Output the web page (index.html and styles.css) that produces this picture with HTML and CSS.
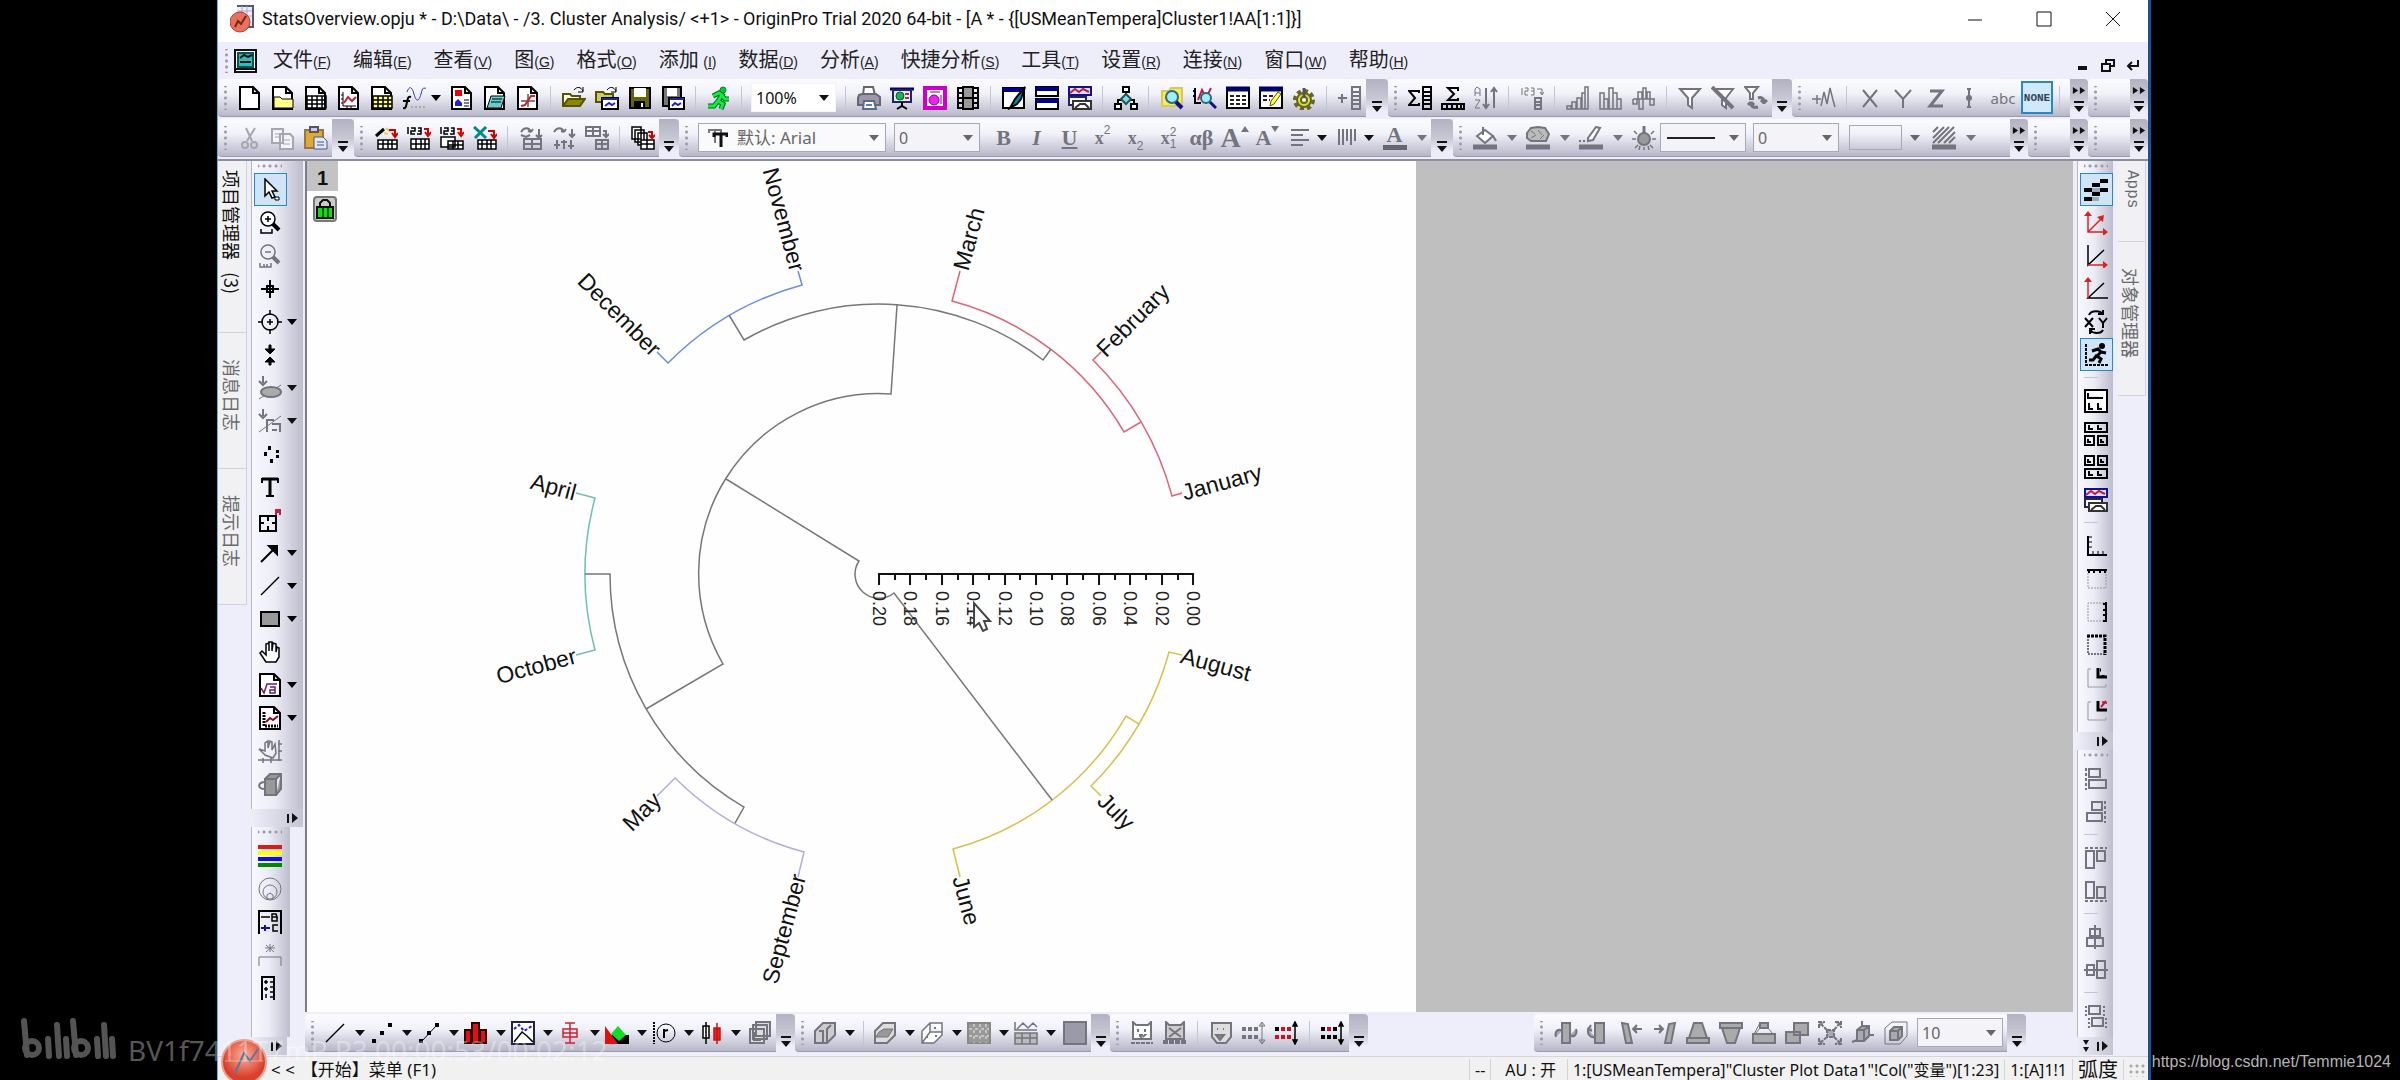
FILE: index.html
```html
<!DOCTYPE html>
<html lang="zh-CN">
<head>
<meta charset="utf-8">
<title>StatsOverview.opju - OriginPro</title>
<link rel="stylesheet" href="styles.css">
</head>
<body>
<svg class="defs" aria-hidden="true">
<symbol id="new" viewBox="0 0 24 24"><path fill="#fff" d="M2 1h13l6 6v16H2zM15 1v6h6"/></symbol>
<symbol id="folder" viewBox="0 0 24 24"><path fill="#fff" d="M2 1h13l6 6v16H2zM15 1v6h6"/><path fill="#ff8" stroke-width="1" d="M3 22V11h6l2 2h11v9z"/></symbol>
<symbol id="book" viewBox="0 0 24 24"><path fill="#fff" d="M2 1h13l6 6v16H2zM15 1v6h6"/><path stroke-width="1.5" d="M3 10h19v12H3zM3 14h19M3 18h19M8 10v12M13 10v12M18 10v12"/></symbol>
<symbol id="graph" viewBox="0 0 24 24"><path fill="#fff" d="M2 1h13l6 6v16H2zM15 1v6h6"/><path d="M6 6v14h13M4 9h2M4 13h2M4 17h2M10 20v2M14 20v2" stroke-width="1"/><path stroke="#c02040" d="M7 17l4-6 4 4 4-4"/></symbol>
<symbol id="matrix" viewBox="0 0 24 24"><path fill="#fff" d="M2 1h13l6 6v16H2zM15 1v6h6"/><path fill="#ff6" stroke-width="1.5" d="M3 10h19v12H3zM3 14h19M3 18h19M8 10v12M13 10v12M18 10v12"/></symbol>
<symbol id="func" viewBox="0 0 24 24"><path stroke="#33a" stroke-width="1" d="M4 6c2-6 5-6 7 2s5 8 7 0 2-5 5-6"/><path d="M8 11c-3-1-3 1-4 5s-1 7-4 6M0 15h7"/><path stroke="#aaa" d="M8 21h15" stroke-dasharray="2 2"/></symbol>
<symbol id="layout" viewBox="0 0 24 24"><path fill="#fff" d="M2 1h13l6 6v16H2zM15 1v6h6"/><path fill="#e00" stroke="none" d="M5 4h7v6H5z"/><path fill="#22c" stroke="none" d="M5 20v-4l3-3 4 4v3z"/><path stroke-width="1" d="M14 14h5M14 17h5M14 20h5"/></symbol>
<symbol id="notes" viewBox="0 0 24 24"><path fill="#fff" d="M2 1h13l6 6v16H2zM15 1v6h6"/><path fill="#6cc" stroke-width="1" d="M8 10h14l-4 12H4zM9 13h10M8 16h10"/></symbol>
<symbol id="fit" viewBox="0 0 24 24"><path fill="#fff" d="M2 1h13l6 6v16H2zM15 1v6h6"/><path d="M5 15h14M12 8v13" stroke-width="1"/><path stroke="#d02020" d="M5 20l4-1 6-9h4"/></symbol>
<symbol id="open" viewBox="0 0 24 24"><path fill="#ffd" d="M1 20V8h7l2 2h8v3" stroke="#550"/><path fill="#880" stroke="#550" d="M1 20l5-7h17l-5 7z"/><path d="M12 4c3-4 7-3 9 1m0-4v5h-5" stroke-width="1"/></symbol>
<symbol id="openx" viewBox="0 0 24 24"><path fill="#cc6" stroke="#550" d="M1 16V6h7l2 2h8v8z"/><path fill="#fff" d="M7 12h16v11H7z"/><path stroke="#22a" d="M7 13h16M10 20l4-3 3 2 3-2"/><path d="M12 4c3-4 7-3 9 1m0-4v5h-5" stroke-width="1"/></symbol>
<symbol id="save" viewBox="0 0 24 24"><path fill="#660" d="M2 2h20v20H2z"/><path fill="#fff" stroke="none" d="M6 2h12v9H6z"/><path fill="#000" d="M7 16h9v6H7z"/><path stroke="#fff" d="M14 17v4"/></symbol>
<symbol id="saveas" viewBox="0 0 24 24"><path fill="#777" d="M2 1h18v19H2z"/><path fill="#fff" stroke="none" d="M6 2h10v8H6z"/><path fill="#fff" d="M8 12h15v11H8z"/><path stroke="#22a" d="M9 13h14M11 20l3-3 3 2 3-2"/></symbol>
<symbol id="run" viewBox="0 0 24 24"><circle cx="16" cy="4" r="3" fill="#0c2" stroke="#084" stroke-width="1"/><path stroke="#063" stroke-width="5" d="M6 10l6-3 3 2-4 6 5 3-2 5M11 15l-4 5-6 0M15 10l3 3h4"/><path stroke="#1e3" stroke-width="3" d="M6 10l6-3 3 2-4 6 5 3-2 5M11 15l-4 5-6 0M15 10l3 3h4"/></symbol>
<symbol id="print" viewBox="0 0 24 24"><path fill="#fff" stroke="#666" d="M7 1h9l2 8H6z"/><path fill="#99a" stroke="#667" d="M2 9l3-1h14l4 3v8H1v-7z"/><path fill="#fff" stroke="#668" d="M7 15h10l2 8H6z"/><path stroke="#48c" d="M9 19h6"/></symbol>
<symbol id="slide" viewBox="0 0 24 24"><path stroke="#008" stroke-width="3" d="M0 3h24"/><path fill="#def" stroke="#226" d="M3 4h18v12H3z"/><circle cx="10" cy="10" r="4" fill="#2a6" stroke="#060" stroke-width="1"/><path stroke="#c22" d="M15 8h4M15 12h4"/><path d="M12 16v5M7 23l5-3 5 3"/></symbol>
<symbol id="ppt" viewBox="0 0 24 24"><path fill="#fff" stroke="#c0c" stroke-width="4" d="M2 2h20v20H2z"/><circle cx="11" cy="14" r="5" fill="#e2e" stroke="#808" stroke-width="1"/><path stroke="#808" stroke-width="1" d="M7 6h10M18 9v9"/></symbol>
<symbol id="film" viewBox="0 0 24 24"><path fill="#999" d="M2 1v22M22 1v22M7 1h10v22H7zM7 12h10M2 2h5M2 7h5M2 12h5M2 17h5M2 22h5M17 2h5M17 7h5M17 12h5M17 17h5M17 22h5" /></symbol>
<symbol id="brush" viewBox="0 0 24 24"><path fill="#fff" d="M1 2h21v20H1z"/><path stroke="#009" stroke-width="4" d="M1 4h21"/><path fill="#08a" d="M23 1L13 13l-5 9 7-4 4-5z"/></symbol>
<symbol id="winh" viewBox="0 0 24 24"><path fill="#fff" d="M1 1h22v9H1zM1 13h22v10H1z"/><path stroke="#009" stroke-width="4" d="M1 3h22M1 15h22"/></symbol>
<symbol id="wins" viewBox="0 0 24 24"><path fill="#ddf" stroke="#118" d="M1 1h22v8H1z"/><path stroke="#c02040" d="M2 7l5-4 4 3 4-3 6 3"/><path fill="#fff" stroke="#226" d="M1 11h17v8H1z"/><path fill="#fff" stroke="#333" d="M5 15h18v8H5zM7 22l5-4h5l4 4"/></symbol>
<symbol id="tree" viewBox="0 0 24 24"><path fill="#fff" d="M9 1h6v5H9zM1 18h6v5H1zM17 18h6v5h-6zM12 6v3M4 18v-4h4M20 18v-4h-4"/><path fill="#7dd" d="M12 8l5 5-5 5-5-5z" stroke="#255"/></symbol>
<symbol id="mag" viewBox="0 0 24 24"><path fill="#ffe94d" stroke="#cc6" d="M2 5h7l2-3h11v18H2z"/><circle cx="12" cy="11" r="6" fill="#9ef" stroke="#367"/><path stroke="#118" stroke-width="4" d="M16 16l6 6"/></symbol>
<symbol id="magg" viewBox="0 0 24 24"><path d="M2 2v15h6M0 5h2M0 10h2"/><path stroke="#c02040" d="M5 14l4-10 4 8 5-10"/><circle cx="13" cy="12" r="5" fill="#9ef" stroke="#367"/><path stroke="#118" stroke-width="3" d="M17 16l6 6"/></symbol>
<symbol id="tbl" viewBox="0 0 24 24"><path fill="#fff" d="M1 2h22v20H1z"/><path stroke="#006" stroke-width="5" d="M0 3h24"/><path stroke="#222" d="M4 10h16M4 14h16M4 18h16" stroke-dasharray="4 2"/></symbol>
<symbol id="tbp" viewBox="0 0 24 24"><path fill="#fff" d="M1 2h22v20H1z"/><path stroke="#006" stroke-width="5" d="M0 3h24"/><path stroke="#222" d="M4 10h10M4 14h7" stroke-dasharray="4 2"/><path stroke="#550" fill="#ff4" stroke-width="1" d="M19 6l3 2-7 10-4 2 1-5z"/></symbol>
<symbol id="gear" viewBox="0 0 24 24"><circle cx="12" cy="14" r="9" stroke="#662" stroke-width="4" stroke-dasharray="4 3"/><circle cx="12" cy="14" r="7" fill="#dd3" stroke="#662"/><circle cx="12" cy="14" r="3" fill="#fff" stroke="#662"/><path stroke="#555" stroke-width="3" d="M12 2v10"/></symbol>
<symbol id="addcol" viewBox="0 0 24 24"><path d="M0 12h9M4 8v9M14 1h8v22h-8zM14 6h8M14 10h8M14 14h8M14 18h8"/></symbol>
<symbol id="sumc" viewBox="0 0 24 24"><path d="M11 7V5H1l6 7-6 7h10v-2M15 1h8v22h-8zM15 6h8M15 10h8M15 14h8M15 18h8"/></symbol>
<symbol id="sumr" viewBox="0 0 24 24"><path d="M17 5V2H7l6 6-6 6h10v-2M1 18h22v5H1zM6 18v5M11 18v5M16 18v5M20 18v5"/></symbol>
<symbol id="sort" viewBox="0 0 24 24"><path stroke-width="1" d="M1 10V3l2-2 3 2v7M1 7h5M1 14h5l-5 8h5"/><path d="M12 2v20M9 18l3 4 3-4M20 22V2M17 6l3-4 3 4"/></symbol>
<symbol id="n123" viewBox="0 0 24 24"><path stroke-width="1" d="M2 2v7M5 2h3v3H5v4h3M11 2h3v7h-3M11 5h3M17 3h5v5M20 6l2 3 2-3"/><path d="M15 12h6v11h-6zM15 16h6M15 19h6"/></symbol>
<symbol id="bar1" viewBox="0 0 24 24"><path stroke-width="1.5" d="M1 23v-3h4v3zM6 23v-7h4v7zM11 23V12h4v11zM16 23V7h3v16zM19 23V1h3v22z"/></symbol>
<symbol id="bar2" viewBox="0 0 24 24"><path stroke-width="1.5" d="M1 23V7h4v16zM5 23V13h4v10zM10 23V2h4v21zM14 23V7h4v16zM18 23V13h4v10z"/></symbol>
<symbol id="bar3" viewBox="0 0 24 24"><path stroke-width="1.5" d="M1 13h22M1 13v5h4v-5M6 13V6h4v7M7 13v10h4V13M11 13V2h3v11M15 13V6h3v7M18 13v6h4v-6"/></symbol>
<symbol id="filter" viewBox="0 0 24 24"><path fill="#fff" d="M2 3h20l-8 9v10l-4-3v-7z"/></symbol>
<symbol id="filterx" viewBox="0 0 24 24"><path fill="#fff" d="M4 3h18l-7 9v10l-4-3v-7z"/><path stroke-width="4" d="M1 1l21 21"/></symbol>
<symbol id="filterr" viewBox="0 0 24 24"><path fill="#fff" d="M1 1h13L9 7v6H6V7z"/><path stroke-width="3" d="M20 16c0-4-3-5-6-4m6 5l-3-3m3 3l3-3M7 17c0 4 3 5 7 4m-7-5l-3 3m3-3l3 3"/></symbol>
<symbol id="addm" viewBox="0 0 24 24"><path stroke-width="1.5" d="M0 13h9M5 9v9M9 20l3-14 3 12 3-16 3 12 2 7"/></symbol>
<symbol id="gx" viewBox="0 0 24 24"><path d="M5 4l14 17M19 4L5 21"/></symbol>
<symbol id="gy" viewBox="0 0 24 24"><path d="M4 4l8 9 8-9M12 13v9"/></symbol>
<symbol id="gz" viewBox="0 0 24 24"><path stroke-width="3" d="M6 5h12L6 20h13"/></symbol>
<symbol id="errb" viewBox="0 0 24 24"><path d="M10 3h4M12 3v18M10 21h4M10 12h4" stroke-width="2"/><circle cx="12" cy="12" r="2" fill="currentColor"/></symbol>
<symbol id="cut" viewBox="0 0 24 24"><path d="M8 2l6 13M17 2L9 15"/><circle cx="7" cy="19" r="3"/><circle cx="16" cy="19" r="3"/></symbol>
<symbol id="copy" viewBox="0 0 24 24"><path fill="#f4f4f8" d="M1 3h11v14H1zM9 8h10l3 3v12H9z"/><path stroke-width="1" d="M4 8h5M4 11h4M12 14h7M12 18h7"/></symbol>
<symbol id="paste" viewBox="0 0 24 24"><path fill="#da3" stroke="#974" d="M1 4h18v18H1z"/><path fill="#ccd" stroke="#556" d="M6 1h8v5H6z"/><path fill="#dde8ff" stroke="#557" stroke-width="1" d="M10 11h9l4 4v8H10zM13 16h7M13 19h7"/></symbol>
<symbol id="impw" viewBox="0 0 24 24"><path d="M2 10l8-7" stroke-width="3"/><path stroke="#e8d060" d="M12 2l4 4M10 7l4 1"/><path stroke="#c00" d="M15 4h6v6M18 7l3 4 3-4"/><path fill="#fff" stroke-width="1.5" d="M4 14h19v9H4zM4 18h19M9 14v9M14 14v9M18 14v9"/></symbol>
<symbol id="imp1" viewBox="0 0 24 24"><path stroke-width="1.5" d="M1 1v7M4 2h4v3H4v3h4M11 2h3v6h-4M11 5h3"/><path stroke="#c00" d="M17 3h4v5M18 6l3 4 3-4"/><path fill="#fff" stroke-width="1.5" d="M4 13h18v10H4zM4 18h18M9 13v10M14 13v10M18 13v10"/></symbol>
<symbol id="imp2" viewBox="0 0 24 24"><path stroke-width="1.5" d="M1 1v7M4 2h4v3H4v3h4M11 2h3v6h-4M11 5h3"/><path stroke="#c00" d="M17 3h4v5M18 6l3 4 3-4"/><path fill="#fff" stroke-width="1.5" d="M1 11h14v10H1zM8 15h15v8H8zM8 19h15M13 15v8M18 15v8"/></symbol>
<symbol id="impx" viewBox="0 0 24 24"><path stroke="#088" stroke-width="3" d="M1 1l12 11M13 1L2 12"/><path stroke="#c00" d="M15 5h6v6M18 8l3 4 3-4"/><path fill="#fff" stroke-width="1.5" d="M5 14h18v9H5zM5 18h18M9 14v9M14 14v9M18 14v9"/></symbol>
<symbol id="rc1" viewBox="0 0 24 24"><path d="M2 6c3-5 8-5 10 0m0 0l-3-1m3 1l2-3M20 3v9M17 9l3 3 3-3M5 13h17v10H5zM5 18h17M13 13v10M2 9l5 2 4-2"/></symbol>
<symbol id="rc2" viewBox="0 0 24 24"><path d="M2 6c3-5 8-5 10 0m0 0l-3-1m3 1l2-3M20 3v7M17 8l3 3 3-3M5 14v9M12 14v9M19 14v9M2 19h6M9 16h6M16 20h6"/></symbol>
<symbol id="rc3" viewBox="0 0 24 24"><path d="M1 1h14v9H1zM1 5h14M8 1v9M18 5h3v5M18 8l3 3 3-3M11 14h12v9H11zM11 18h12M17 14v9"/></symbol>
<symbol id="dup" viewBox="0 0 24 24"><path fill="#fff" stroke-width="1.5" d="M1 1h9v12H1zM4 4h9v12H4zM7 7h9v12H7z"/><path fill="#fff" stroke-width="1.5" d="M10 14h13v9H10zM10 18h13M16 14v9"/><path stroke="#c00" d="M17 6h4v5M18 9l3 3 3-3"/></symbol>
<symbol id="al" viewBox="0 0 24 24"><path d="M2 4h18M2 9h12M2 14h18M2 19h12"/></symbol>
<symbol id="vl" viewBox="0 0 24 24"><path d="M3 3v16M7 3v16M11 3v12M15 3v16M19 3v12" stroke-width="2"/></symbol>
<symbol id="fill" viewBox="0 0 24 24"><path fill="#fff" d="M4 10l8-6 8 6-8 7zM10 1v8"/><path stroke-width="5" d="M0 21h24"/><path d="M20 10l3 5"/></symbol>
<symbol id="pal" viewBox="0 0 24 24"><path fill="#bbb" d="M1 7l4-5 7-1 7 1 4 6-3 7H5L1 12z"/><path stroke-width="1" d="M5 5l4 3M12 4l4 5M5 12l5-3M14 13l4-4"/><path stroke-width="5" d="M0 21h24"/></symbol>
<symbol id="pen" viewBox="0 0 24 24"><path fill="#fff" d="M9 12L17 1l4 1-7 12-5 1z"/><path d="M0 15h8" stroke-dasharray="2 2"/><path stroke-width="5" d="M0 21h24"/></symbol>
<symbol id="bulb" viewBox="0 0 24 24"><path stroke-width="3" d="M12 0v7"/><circle cx="12" cy="13" r="6" fill="#999"/><path stroke-width="1.5" d="M0 13h4M20 13h4M2 5l3 3M22 5l-3 3M3 22l3-3M21 22l-3-3M12 21v3M8 20l-1 4M16 20l1 4"/></symbol>
<symbol id="hatch" viewBox="0 0 24 24"><path d="M1 6l5-5M1 12L12 1M1 17L17 1M6 17L22 1M12 17L23 6M17 17l6-6"/><path stroke-width="5" d="M0 21h24"/></symbol>
<symbol id="ptr" viewBox="0 0 24 24"><path fill="#fff" stroke-width="1.5" d="M7 1v17l4-4 3 6 3-1-3-6h5z"/><path fill="#fff" stroke-width="1" d="M17 19h4v3h-4z"/></symbol>
<symbol id="zin" viewBox="0 0 24 24"><circle cx="10" cy="8" r="7" fill="#fff" stroke-width="1.5"/><path stroke-width="1.5" d="M10 5v6M7 8h6M3 18v4h11v-4"/><path stroke-width="4" d="M15 13l6 6"/></symbol>
<symbol id="zout" viewBox="0 0 24 24"><circle cx="10" cy="8" r="7" stroke-width="1.5"/><path stroke-width="1.5" d="M7 8h6M2 19v4h11v-4M6 20v3M9 20v3"/><path stroke-width="4" d="M15 13l6 6"/></symbol>
<symbol id="cross" viewBox="0 0 24 24"><path d="M12 3v18M3 12h18M9 9h6v6H9z"/></symbol>
<symbol id="target" viewBox="0 0 24 24"><circle cx="12" cy="12" r="8" stroke-width="1.5"/><path stroke-width="1.5" d="M12 0v5M12 19v5M0 12h5M19 12h5M12 9v6M9 12h6"/></symbol>
<symbol id="sel2" viewBox="0 0 24 24"><path fill="currentColor" stroke-width="1" d="M11 2h2v4h4l-5 5-5-5h4zM11 22h2v-3h4l-5-5-5 5h4z"/></symbol>
<symbol id="mask" viewBox="0 0 24 24"><path stroke-width="1" d="M1 23L23 9"/><ellipse cx="13" cy="16" rx="10" ry="5" fill="#aaa"/><path d="M5 0v7M1 5l4 4 4-4"/></symbol>
<symbol id="mask2" viewBox="0 0 24 24"><path stroke-width="1" d="M1 23L23 7"/><path d="M5 0v7M1 5l4 4 4-4M9 23V11h7M14 15h8v8M14 21h5"/></symbol>
<symbol id="dots" viewBox="0 0 24 24"><path fill="currentColor" stroke="none" d="M10 4h3v4h-3zM6 10h3v4H6zM12 17h3v4h-3zM18 8h3v3h-3zM18 13h3v3h-3z"/></symbol>
<symbol id="tt" viewBox="0 0 24 24"><path d="M4 8V4h16v4"/><path stroke-width="3" d="M4 4h16M12 4v17"/><path d="M8 21h8"/></symbol>
<symbol id="rgn" viewBox="0 0 24 24"><path d="M2 8h16v15H2zM10 8v5M10 18v5M2 15h4M14 15h4"/><path stroke="#c02040" d="M18 7V2h4v5M18 4h4"/></symbol>
<symbol id="arrow" viewBox="0 0 24 24"><path d="M3 21L17 7"/><path fill="currentColor" d="M11 5h8v8z"/></symbol>
<symbol id="line" viewBox="0 0 24 24"><path stroke-width="1.5" d="M3 21L21 3"/></symbol>
<symbol id="rect" viewBox="0 0 24 24"><path fill="#999" d="M3 5h18v14H3z"/></symbol>
<symbol id="hand" viewBox="0 0 24 24"><path fill="#fff" stroke-width="1.5" d="M8 22l-6-9 2-2 4 4V4l3-1v8V2h3v9l1-8 3 1v8l1-5 2 1v9l-3 5z"/></symbol>
<symbol id="sqa" viewBox="0 0 24 24"><path fill="#fff" d="M2 1h14l6 6v16H2zM16 1v6h6"/><path stroke="#626" stroke-width="1.5" d="M3 15l3 5 3-9h10M12 14h5v6h-5v-3h5"/></symbol>
<symbol id="gins" viewBox="0 0 24 24"><path fill="#fff" d="M2 1h14l6 6v16H2zM16 1v6h6"/><path d="M6 6v14h14" stroke-width="3" stroke-dasharray="2 1"/><path stroke="#902" d="M8 16l4-4 3 2 5-4"/></symbol>
<symbol id="hand2" viewBox="0 0 24 24"><path stroke-width="1.5" d="M7 16l-6-6 6 2V4l3-2v7l2-7 2 1v8l3-6 1 9-3 5zM21 1v21M0 21h24M20 5h4M20 12h4M5 19v5M13 19v5"/></symbol>
<symbol id="cube" viewBox="0 0 24 24"><path fill="#999" d="M7 7h11v16H7zM7 7l5-5h11l-5 5M23 2v15l-5 6"/><path d="M6 17c-7-1-6-6 0-7"/></symbol>
<symbol id="stripes" viewBox="0 0 24 24"><path stroke-width="4" stroke="#e01818" d="M0 3h24"/><path stroke-width="4" stroke="#ff0" d="M0 9h24"/><path stroke-width="4" stroke="#11c" d="M0 15h24"/><path stroke-width="4" stroke="#080" d="M0 21h24"/></symbol>
<symbol id="circ" viewBox="0 0 24 24"><circle cx="12" cy="12" r="11" stroke-width="1"/><circle cx="12" cy="15" r="7" stroke-width="1"/><path stroke-width="1" d="M9 22v-4l3-2 3 2v4"/></symbol>
<symbol id="bc" viewBox="0 0 24 24"><path d="M1 24V1h22v23"/><path stroke-width="1.5" d="M3 7h9M14 4h4l1 3h-5zM14 7h5v4h-5zM20 15h-5v6h5"/><path stroke="#11a" d="M3 18h9M7 15v6"/></symbol>
<symbol id="ast" viewBox="0 0 24 24"><path d="M1 23V14h22v9M12 1v8M7 5h10M8 2l8 7M16 2L8 9" stroke-width="1"/></symbol>
<symbol id="rul" viewBox="0 0 24 24"><path d="M4 24V1h12v23"/><path d="M8 4v4M6 6h4M8 11v4M6 13h4M8 18v4M12 6h4M12 11h4M12 16h4M12 21h4" stroke-width="1.5"/></symbol>
<symbol id="anti" viewBox="0 0 24 24"><path fill="currentColor" stroke="none" d="M16 1h8v4h-8zM8 5h8v4H8zM0 10h8v4H0zM16 10h8v4h-8zM8 14h8v4H8zM0 19h8v4H0z"/><path fill="#9ab" stroke="none" d="M8 10h8v4H8zM8 19h7v4H8z"/></symbol>
<symbol id="ax1" viewBox="0 0 24 24"><path stroke="#d22" stroke-width="1.5" d="M4 4v17h17M4 21L18 7"/><path fill="#d22" stroke="none" d="M4 0l4 5H0zM24 21l-5-4v8zM20 4l-1 7-6-5z"/></symbol>
<symbol id="ax2" viewBox="0 0 24 24"><path stroke-width="1.5" d="M4 1v20L20 6"/><path stroke="#d22" stroke-width="1.5" d="M4 21h17"/><path fill="#d22" stroke="none" d="M24 21l-5-4v8z"/></symbol>
<symbol id="ax3" viewBox="0 0 24 24"><path stroke-width="1.5" d="M24 21H4L20 6"/><path stroke="#d22" stroke-width="1.5" d="M4 4v17"/><path fill="#d22" stroke="none" d="M4 0l4 5H0z"/></symbol>
<symbol id="xy" viewBox="0 0 24 24"><path d="M1 8l8 9M9 8l-8 9M15 8l4 5 4-5M19 13v5M5 5c2-5 12-5 14 0M14 4h5V0M19 20c-2 4-10 4-13 0M11 19H6v5"/></symbol>
<symbol id="runb" viewBox="0 0 24 24"><path d="M2 1v21h22" stroke-dasharray="3 1"/><circle cx="18" cy="3" r="2" fill="currentColor"/><path stroke-width="3" d="M8 8l6-2 3 3-4 4 4 3-2 4M13 12l-4 5H5M17 9l5 1"/></symbol>
<symbol id="l1" viewBox="0 0 24 24"><path fill="#fff" d="M1 1h22v22H1zM4 4v5h15M5 14v6h4M14 14v6h4"/></symbol>
<symbol id="l2" viewBox="0 0 24 24"><path d="M1 1h22v9H1zM1 14h9v9H1zM14 14h9v9h-9zM5 3v4h4M14 3v4h4M4 17v3h3M17 17v3h3"/></symbol>
<symbol id="l3" viewBox="0 0 24 24"><path d="M1 14h22v9H1zM1 1h9v9H1zM14 1h9v9h-9zM5 16v4h4M14 16v4h4M4 4v3h3M17 4v3h3"/></symbol>
<symbol id="e1" viewBox="0 0 24 24"><path d="M4 2v19h19" stroke-width="2"/><path d="M5 3h3M5 8h3M5 13h3M9 20v-3M14 20v-3M19 20v-3" stroke-width="1"/></symbol>
<symbol id="e2" viewBox="0 0 24 24"><path d="M4 3v18h18V3" stroke="#999" stroke-width="1" stroke-dasharray="2 1"/><path d="M3 3h20M5 3v3M10 3v3M16 3v3M21 3v3" /></symbol>
<symbol id="e3" viewBox="0 0 24 24"><path d="M20 21H4V3h17" stroke="#999" stroke-width="1" stroke-dasharray="2 1"/><path d="M22 2v20M22 4h-3M22 10h-3M22 15h-3M22 21h-3" /></symbol>
<symbol id="e4" viewBox="0 0 24 24"><path d="M4 3v18h17" stroke="#777" stroke-dasharray="2 1"/><path stroke-width="3" d="M3 3h18v19" stroke-dasharray="3 1"/></symbol>
<symbol id="e5" viewBox="0 0 24 24"><path d="M7 3H4v18h18v-3" stroke="#999" stroke-width="1"/><path d="M14 2v9h9M16 4h1M19 11V9" stroke-width="3"/></symbol>
<symbol id="e6" viewBox="0 0 24 24"><path d="M7 3H4v18h18v-3" stroke="#999" stroke-width="1"/><path stroke-width="3" d="M14 2v9h9"/><path stroke="#c02040" d="M17 8l5-6M18 3l5 1"/></symbol>
<symbol id="p1" viewBox="0 0 24 24"><path d="M2 1v22" stroke-dasharray="3 2"/><path d="M5 2h11v8H5zM5 13h17v8H5z"/></symbol>
<symbol id="p2" viewBox="0 0 24 24"><path d="M21 1v22" stroke-dasharray="3 2"/><path d="M8 2h10v8H8zM3 13h15v8H3z"/></symbol>
<symbol id="p3" viewBox="0 0 24 24"><path d="M1 2h22" stroke-dasharray="3 2"/><path d="M2 5h8v17H2zM13 5h8v10h-8z"/></symbol>
<symbol id="p4" viewBox="0 0 24 24"><path d="M1 22h22" stroke-dasharray="3 2"/><path d="M2 3h8v16H2zM13 8h8v11h-8z"/></symbol>
<symbol id="p5" viewBox="0 0 24 24"><path d="M11 0v24M6 4h10v7H6zM3 13h16v8H3z"/></symbol>
<symbol id="p6" viewBox="0 0 24 24"><path d="M0 12h24M3 7h7v10H3zM13 3h8v17h-8z"/></symbol>
<symbol id="p7" viewBox="0 0 24 24"><path d="M2 2v10M20 2v10M5 14v10M22 14v10" stroke-dasharray="2 2"/><path d="M5 2h11v8H5zM8 14h11v8H8z"/></symbol>
<symbol id="scat" viewBox="0 0 24 24"><path fill="currentColor" stroke="none" d="M2 18h4v4H2zM10 10h4v4h-4zM18 2h4v4h-4z"/></symbol>
<symbol id="ls" viewBox="0 0 24 24"><path stroke-width="1" d="M4 21L20 4"/><path fill="currentColor" stroke="none" d="M2 18h4v4H2zM10 10h4v4h-4zM18 2h4v4h-4z"/></symbol>
<symbol id="colb" viewBox="0 0 24 24"><path fill="#d11" stroke="#300" d="M1 22V9h6v13zM8 22V2h7v20zM16 22V9h6v13z"/></symbol>
<symbol id="multi" viewBox="0 0 24 24"><path fill="#fff" stroke="#224" d="M1 1h22v22H1z"/><path stroke-width="1.5" d="M3 21l8-10 5 4 6 6"/><path stroke="#22c" d="M3 8l5-4 5 6 8-5" stroke-dasharray="3 2"/></symbol>
<symbol id="box" viewBox="0 0 24 24"><path stroke="#d12030" stroke-width="1.5" d="M7 2h10M7 22h10M12 2v20M5 8h14v8H5zM5 12h14"/></symbol>
<symbol id="area" viewBox="0 0 24 24"><path fill="#000" stroke="none" d="M0 23V14h24v9z"/><path fill="#d11" stroke="none" d="M0 5l13 18H0z"/><path fill="#1d2" stroke="none" d="M6 13l7-8 8 9-7 6z"/></symbol>
<symbol id="polar" viewBox="0 0 24 24"><path d="M2 1v22" stroke-dasharray="2 1"/><circle cx="14" cy="12" r="9" stroke-width="1"/><path stroke-width="2" d="M12 17V8M12 10l4-1"/></symbol>
<symbol id="candle" viewBox="0 0 24 24"><path fill="#fff" stroke-width="1.5" d="M7 1v22M4 5h6v12H4z"/><path fill="#e22" stroke="#c11" stroke-width="1.5" d="M18 2v21M15 7h6v12h-6z"/></symbol>
<symbol id="stack" viewBox="0 0 24 24"><path fill="#ddd" d="M8 1h14v14H8zM5 4h14v14H5zM2 8h14v14H2zM6 11v8h7"/></symbol>
<symbol id="c3d" viewBox="0 0 24 24"><path fill="#ccc" d="M2 10l8-8h12v12l-8 8H2zM6 10h4v12M14 22V8l4-4"/></symbol>
<symbol id="c3e" viewBox="0 0 24 24"><path fill="#ddd" d="M2 10l8-8h12v12l-8 8H2z"/><path fill="#999" stroke-width="1" d="M6 11l5-3h9l-5 8H3z"/></symbol>
<symbol id="c3f" viewBox="0 0 24 24"><path fill="#fff" stroke-width="1.5" d="M2 10l8-8h12v12l-8 8H2zM10 2v9h12M10 11l-8 11"/><path d="M14 7h2M6 16h2M15 15h2"/></symbol>
<symbol id="cont" viewBox="0 0 24 24"><path fill="#999" d="M1 2h22v20H1z" stroke="#888"/><path stroke="#eee" d="M2 8h20M2 15h20M7 3v19M13 3v19M19 3v19" stroke-width="1" stroke-dasharray="3 3"/></symbol>
<symbol id="cont2" viewBox="0 0 24 24"><path stroke-width="1.5" d="M1 1v8h22M3 8l6-6 5 5 5-5 4 4"/><path fill="#bbb" stroke-width="1.5" d="M1 12h22v11H1zM1 17h22M8 12v11M16 12v11"/></symbol>
<symbol id="gsq" viewBox="0 0 24 24"><path fill="#9a9aa8" d="M1 1h22v22H1z"/></symbol>
<symbol id="m1" viewBox="0 0 24 24"><path fill="#fff" d="M3 1l3 3h12l3-3v17H3z"/><path d="M8 8v3M15 8v3M9 14h6l-3 3zM1 22h22" stroke-dasharray="4 1"/></symbol>
<symbol id="m2" viewBox="0 0 24 24"><path fill="#ccc" d="M3 1l3 3h12l3-3v17H3zM6 7l12 9M18 7L6 16"/><path stroke-width="4" d="M0 21h24" stroke-dasharray="5 1"/></symbol>
<symbol id="m3" viewBox="0 0 24 24"><path fill="#ddd" d="M3 2h19v14l-5 6H8l-5-6zM12 2h10v12"/><path fill="#888" d="M7 14h8l-4 5zM8 8h1M14 8h1"/></symbol>
<symbol id="r1" viewBox="0 0 24 24"><path fill="currentColor" stroke="none" d="M0 6h4v4H0zM6 6h4v4H6zM12 6h4v4h-4zM0 14h4v4H0zM6 14h4v4H6zM12 14h4v4h-4z"/><path stroke-width="1" d="M20 2v20M17 5l3-4 3 4zM17 19l3 4 3-4z"/></symbol>
<symbol id="r2" viewBox="0 0 24 24"><path fill="currentColor" stroke="none" d="M0 6h4v4H0z"/><path fill="#c12" stroke="none" d="M6 6h4v4H6zM12 6h4v4h-4zM0 14h4v4H0zM6 14h4v4H6zM12 14h4v4h-4z"/><path fill="currentColor" stroke-width="1.5" d="M20 2v20M18 5l2-4 2 4zM18 19l2 4 2-4z"/></symbol>
<symbol id="r3" viewBox="0 0 24 24"><path fill="currentColor" stroke="none" d="M0 6h4v4H0zM12 6h4v4h-4zM0 14h4v4H0zM6 14h4v4H6zM12 14h4v4h-4z"/><path fill="#c12" stroke="none" d="M6 6h4v4H6z"/><path fill="currentColor" stroke-width="1.5" d="M20 2v20M18 5l2-4 2 4zM18 19l2 4 2-4z"/></symbol>
<symbol id="q1" viewBox="0 0 24 24"><path fill="#aaa" d="M8 2h8v20H8zM2 16c-2-6 3-9 6-6M22 8c2 6-3 9-6 6"/></symbol>
<symbol id="q2" viewBox="0 0 24 24"><path fill="#aaa" d="M8 2h9v20H8zM1 8c-1 6 3 9 7 8M4 4L1 8l4 2"/></symbol>
<symbol id="q3" viewBox="0 0 24 24"><path fill="#aaa" d="M2 2l6 1 4 19H6zM22 8h-9M17 4l-4 4 4 4"/></symbol>
<symbol id="q4" viewBox="0 0 24 24"><path fill="#aaa" d="M22 2l-6 1-4 19h6zM1 8h9M6 4l4 4-4 4"/></symbol>
<symbol id="q5" viewBox="0 0 24 24"><path fill="#aaa" d="M8 2h8l5 15H3zM1 17h22v5H1z"/></symbol>
<symbol id="q6" viewBox="0 0 24 24"><path fill="#aaa" d="M1 2h22v5H1zM3 7h18l-5 15H8z"/></symbol>
<symbol id="q7" viewBox="0 0 24 24"><path fill="#aaa" d="M1 13h22v9H1zM8 2h8v5H8z"/><path stroke-width="1" d="M8 7l-5 6M16 7l5 6M8 2l-6 11"/></symbol>
<symbol id="q8" viewBox="0 0 24 24"><path fill="#aaa" d="M9 2h14v12H9zM1 11h14v11H1z"/></symbol>
<symbol id="q9" viewBox="0 0 24 24"><path fill="#aaa" d="M9 9h7v7H9zM9 9L2 2M16 9l6-7M9 16l-7 6M16 16l6 6M1 7V1h6M17 1h6v6M1 17v6h6M23 17v6h-6" stroke-dasharray="4 1"/></symbol>
<symbol id="q10" viewBox="0 0 24 24"><path fill="#aaa" d="M6 9l5-4h7v10l-5 5H6zM11 0v5M1 21l5-2M18 14h5M6 9h7v11M13 9l5-4"/></symbol>
<symbol id="q11" viewBox="0 0 24 24"><path stroke-width="1" d="M1 7l7-6h15v14l-7 8H1z"/><path fill="#aaa" d="M6 10l4-4h8v9l-4 4H6zM6 10h8v9M14 10l4-4"/></symbol>
<symbol id="ff" viewBox="0 0 16 8"><path fill="currentColor" stroke="none" d="M1 0l6 4-6 4zM9 0l6 4-6 4z"/></symbol>
<symbol id="dd" viewBox="0 0 8 14"><path fill="currentColor" stroke="none" d="M1 1h6L4 6zM1 8h6l-3 5z"/></symbol>
</svg>

<div class="desktop">
<div class="app">
<header class="title">
  <svg class="logo" viewBox="0 0 24 28"><path d="M7 1h16v21H9" fill="#eef" stroke="#557"/><path d="M7 6h15M7 11h15M12 1v20M17 1v20" stroke="#aac" stroke-width="1"/><circle cx="10" cy="17" r="10" fill="#e8705c" stroke="#b43c2c" stroke-width="1"/><path d="M5 22l3-6 3 3 5-8" stroke="#7a2418"/></svg>
  <h1>StatsOverview.opju * - D:\Data\ - /3. Cluster Analysis/ &lt;+1&gt; - OriginPro Trial 2020 64-bit - [A * - {[USMeanTempera]Cluster1!AA[1:1]}]</h1>
  <div class="winbtns">
    <button aria-label="最小化"><svg viewBox="0 0 16 16"><path d="M1 9h14"/></svg></button>
    <button aria-label="最大化"><svg viewBox="0 0 16 16"><path d="M1 1h14v14H1z"/></svg></button>
    <button aria-label="关闭"><svg viewBox="0 0 16 16"><path d="M1 1l14 14M15 1L1 15"/></svg></button>
  </div>
</header>
<nav class="menu">
  <i class="grip"></i>
  <svg class="doc" viewBox="0 0 24 24"><path fill="#fff" d="M1 1h21v22H1z"/><path fill="#3bb" stroke="#055" d="M4 4h15v14H4z"/><path d="M6 9l4-3 4 2 4-2M6 13h11M2 20h20"/></svg>
  <button>文件<small>(<u>F</u>)</small></button><button>编辑<small>(<u>E</u>)</small></button><button>查看<small>(<u>V</u>)</small></button><button>图<small>(<u>G</u>)</small></button><button>格式<small>(<u>O</u>)</small></button><button>添加 <small>(<u>I</u>)</small></button><button>数据<small>(<u>D</u>)</small></button><button>分析<small>(<u>A</u>)</small></button><button>快捷分析<small>(<u>S</u>)</small></button><button>工具<small>(<u>T</u>)</small></button><button>设置<small>(<u>R</u>)</small></button><button>连接<small>(<u>N</u>)</small></button><button>窗口<small>(<u>W</u>)</small></button><button>帮助<small>(<u>H</u>)</small></button>
  <div class="mdi">
    <button aria-label="最小化窗口"><svg viewBox="0 0 14 14"><path d="M2 10h9" stroke-width="4"/></svg></button>
    <button aria-label="还原窗口"><svg viewBox="0 0 14 14"><path d="M5 5V2h8v6h-3M1 6h8v7H1z" stroke-width="2"/></svg></button>
    <button aria-label="关闭窗口"><svg viewBox="0 0 14 14"><path d="M12 2v6H3M6 4L2 8l4 4" stroke-width="2"/></svg></button>
  </div>
</nav>

<div class="row">
  <div class="bar"><i class="grip"></i>
    <button class="b" aria-label="新建项目"><svg><use href="#new"/></svg></button><button class="b" aria-label="新建文件夹"><svg><use href="#folder"/></svg></button><button class="b" aria-label="新建工作簿"><svg><use href="#book"/></svg></button><button class="b" aria-label="新建图"><svg><use href="#graph"/></svg></button><button class="b" aria-label="新建矩阵"><svg><use href="#matrix"/></svg></button><button class="b d47" aria-label="新建函数图"><svg><use href="#func"/></svg><i class="ar"></i></button><button class="b" aria-label="新建布局"><svg><use href="#layout"/></svg></button><button class="b" aria-label="新建备注"><svg><use href="#notes"/></svg></button><button class="b" aria-label="数字化"><svg><use href="#fit"/></svg></button><i class="sep"></i>
    <button class="b" aria-label="打开"><svg><use href="#open"/></svg></button><button class="b" aria-label="打开Excel"><svg><use href="#openx"/></svg></button><button class="b" aria-label="保存"><svg><use href="#save"/></svg></button><button class="b" aria-label="保存模板"><svg><use href="#saveas"/></svg></button><i class="sep"></i>
    <button class="b" aria-label="运行"><svg><use href="#run"/></svg></button><i class="sep"></i>
    <span class="combo zoom"><select aria-label="缩放"><option>100%</option></select><i class="ar"></i></span><i class="sep"></i>
    <button class="b" aria-label="打印"><svg><use href="#print"/></svg></button><button class="b" aria-label="幻灯片"><svg><use href="#slide"/></svg></button><button class="b" aria-label="发送"><svg><use href="#ppt"/></svg></button><button class="b" aria-label="视频"><svg><use href="#film"/></svg></button><i class="sep"></i>
    <button class="b" aria-label="主题"><svg><use href="#brush"/></svg></button><button class="b" aria-label="窗口"><svg><use href="#winh"/></svg></button><button class="b" aria-label="合并"><svg><use href="#wins"/></svg></button><i class="sep"></i>
    <button class="b" aria-label="项目管理器"><svg><use href="#tree"/></svg></button><i class="sep"></i>
    <button class="b" aria-label="查看器"><svg><use href="#mag"/></svg></button><button class="b" aria-label="图查看"><svg><use href="#magg"/></svg></button><button class="b" aria-label="结果日志"><svg><use href="#tbl"/></svg></button><button class="b" aria-label="命令窗口"><svg><use href="#tbp"/></svg></button><button class="b" aria-label="代码"><svg><use href="#gear"/></svg></button><i class="sep"></i>
    <button class="b g" aria-label="添加列"><svg><use href="#addcol"/></svg></button>
  </div><i class="cap wcap"></i>
  <div class="bar"><i class="grip"></i>
    <button class="b" aria-label="列统计"><svg><use href="#sumc"/></svg></button><button class="b" aria-label="行统计"><svg><use href="#sumr"/></svg></button><button class="b g" aria-label="排序"><svg><use href="#sort"/></svg></button><i class="sep"></i>
    <button class="b g" aria-label="设置列值"><svg><use href="#n123"/></svg></button><i class="sep"></i>
    <button class="b g" aria-label="升序"><svg><use href="#bar1"/></svg></button><button class="b g" aria-label="随机"><svg><use href="#bar2"/></svg></button><button class="b g" aria-label="正态"><svg><use href="#bar3"/></svg></button><i class="sep"></i>
    <button class="b g" aria-label="筛选"><svg><use href="#filter"/></svg></button><button class="b g" aria-label="禁用筛选"><svg><use href="#filterx"/></svg></button><button class="b g" aria-label="重新筛选"><svg><use href="#filterr"/></svg></button>
  </div><i class="cap"></i>
  <div class="bar grow"><i class="grip"></i>
    <button class="b g" aria-label="添加曲线"><svg><use href="#addm"/></svg></button><i class="sep"></i>
    <button class="b g" aria-label="X"><svg><use href="#gx"/></svg></button><button class="b g" aria-label="Y"><svg><use href="#gy"/></svg></button><button class="b g" aria-label="Z"><svg><use href="#gz"/></svg></button><button class="b g" aria-label="误差"><svg><use href="#errb"/></svg></button><button class="b g abc">abc</button><button class="b home">NONE</button><i class="sep"></i>
  </div><i class="cap more"><svg><use href="#ff"/></svg></i>
  <div class="bar stub"><i class="grip"></i></div><i class="cap more"><svg><use href="#ff"/></svg></i>
</div>

<div class="row">
  <div class="bar"><i class="grip"></i>
    <button class="b l" aria-label="剪切"><svg><use href="#cut"/></svg></button><button class="b l" aria-label="复制"><svg><use href="#copy"/></svg></button><button class="b" aria-label="粘贴"><svg><use href="#paste"/></svg></button>
  </div><i class="cap wcap"></i>
  <div class="bar"><i class="grip"></i>
    <button class="b" aria-label="导入向导"><svg><use href="#impw"/></svg></button><button class="b" aria-label="导入单个"><svg><use href="#imp1"/></svg></button><button class="b" aria-label="导入多个"><svg><use href="#imp2"/></svg></button><button class="b" aria-label="导入Excel"><svg><use href="#impx"/></svg></button><i class="sep"></i>
    <button class="b g" aria-label="重新导入"><svg><use href="#rc1"/></svg></button><button class="b g" aria-label="重算"><svg><use href="#rc2"/></svg></button><button class="b g" aria-label="复制表"><svg><use href="#rc3"/></svg></button><i class="sep"></i>
    <button class="b" aria-label="批处理"><svg><use href="#dup"/></svg></button>
  </div><i class="cap"></i>
  <div class="bar"><i class="grip"></i>
    <span class="combo font"><svg viewBox="0 0 20 20"><path d="M1 5V2h12v3M7 2v13" stroke="#777"/><path d="M6 9V6h13v3M13 6v13" stroke="#111" stroke-width="3"/></svg><select aria-label="字体"><option>默认: Arial</option></select><i class="ar"></i></span>
    <span class="combo size"><select aria-label="字号"><option>0</option></select><i class="ar"></i></span>
    <button class="b t"><b>B</b></button><button class="b t"><i>I</i></button><button class="b t"><u>U</u></button><button class="b t x">x<sup>2</sup></button><button class="b t x">x<sub>2</sub></button><button class="b t x">x<span class="ss"><span>2</span><span>1</span></span></button><button class="b t">αβ</button><button class="b t big">A<svg class="tri"><path d="M0 6l4-6 4 6z"/></svg></button><button class="b t">A<svg class="tri"><path d="M0 0l4 6 4-6z"/></svg></button><button class="b g d47" aria-label="对齐"><svg><use href="#al"/></svg><i class="ar k"></i></button><button class="b g d47" aria-label="方向"><svg><use href="#vl"/></svg><i class="ar k"></i></button><button class="b g d53"><span class="fc">A</span><i class="ar"></i></button>
  </div><i class="cap wcap"></i>
  <div class="bar grow"><i class="grip"></i>
    <button class="b g d53" aria-label="填充"><svg><use href="#fill"/></svg><i class="ar"></i></button><button class="b g d53" aria-label="调色板"><svg><use href="#pal"/></svg><i class="ar"></i></button><button class="b g d53" aria-label="线色"><svg><use href="#pen"/></svg><i class="ar"></i></button><button class="b g" aria-label="灯光"><svg><use href="#bulb"/></svg></button>
    <span class="combo size lw"><hr><select aria-label="线型"><option></option></select><i class="ar"></i></span>
    <span class="combo size"><select aria-label="线宽"><option>0</option></select><i class="ar"></i></span>
    <button class="sw" aria-label="图案"><i></i><i class="ar"></i></button><button class="b g d53" aria-label="填充图案"><svg><use href="#hatch"/></svg><i class="ar"></i></button>
  </div><i class="cap more"><svg><use href="#ff"/></svg></i>
  <div class="bar stub"><i class="grip"></i></div><i class="cap more"><svg><use href="#ff"/></svg></i>
  <div class="bar stub"><i class="grip"></i></div><i class="cap more"><svg><use href="#ff"/></svg></i>
</div>

<main>
  <aside class="tabs">
    <button class="tab on t1">项目管理器 <span>(3)</span></button><button class="tab t2">消息日志</button><button class="tab t2">提示日志</button>
  </aside>
  <div class="side left">
    <div class="vbar wide"><i class="vgrip"></i>
      <button class="v on" aria-label="指针"><svg><use href="#ptr"/></svg></button><button class="v" aria-label="放大"><svg><use href="#zin"/></svg></button><button class="v g" aria-label="缩小"><svg><use href="#zout"/></svg></button><button class="v" aria-label="读屏幕"><svg><use href="#cross"/></svg></button><button class="v" aria-label="读数据"><svg><use href="#target"/></svg><i class="ar"></i></button><button class="v" aria-label="选择"><svg><use href="#sel2"/></svg></button><button class="v g" aria-label="屏蔽"><svg><use href="#mask"/></svg><i class="ar k"></i></button><button class="v g" aria-label="区域屏蔽"><svg><use href="#mask2"/></svg><i class="ar k"></i></button><button class="v" aria-label="绘制数据"><svg><use href="#dots"/></svg></button><button class="v" aria-label="文本"><svg><use href="#tt"/></svg></button><button class="v" aria-label="注释"><svg><use href="#rgn"/></svg></button><button class="v" aria-label="箭头"><svg><use href="#arrow"/></svg><i class="ar"></i></button><button class="v" aria-label="直线"><svg><use href="#line"/></svg><i class="ar"></i></button><button class="v" aria-label="矩形"><svg><use href="#rect"/></svg><i class="ar"></i></button><button class="v" aria-label="平移"><svg><use href="#hand"/></svg></button><button class="v" aria-label="公式"><svg><use href="#sqa"/></svg><i class="ar"></i></button><button class="v" aria-label="插入图"><svg><use href="#gins"/></svg><i class="ar"></i></button><button class="v g" aria-label="缩放平移"><svg><use href="#hand2"/></svg></button><button class="v g" aria-label="旋转"><svg><use href="#cube"/></svg></button>
    </div><i class="vcap"></i>
    <div class="vbar narrow grow"><i class="vgrip"></i>
      <button class="v" aria-label="颜色"><svg><use href="#stripes"/></svg></button><button class="v g" aria-label="气泡"><svg><use href="#circ"/></svg></button><button class="v" aria-label="图例"><svg><use href="#bc"/></svg></button><button class="v g" aria-label="星号"><svg><use href="#ast"/></svg></button><button class="v" aria-label="刻度"><svg><use href="#rul"/></svg></button>
    </div><i class="vcap nar"></i>
  </div>

  <section class="center">
    <div class="work">
      <div class="page">
        <div class="layer"><span>1</span><svg viewBox="0 0 24 26"><rect x="1" y="1" width="22" height="24" rx="3" fill="#ccc" stroke="#777"/><path d="M7 12V7l3-3h4l3 3v5"/><path fill="#1d1" d="M4 11h16v11H4z"/><path d="M10 12v9M15 12v9" stroke="#060"/></svg></div>
        <svg class="plot" viewBox="309 163 1109 840">
          <g transform="translate(881 576)" class="den">
            <g stroke="#dc6478"><path d="M303 -81L293 -78A303 303 0 0 0 214 -214L222 -222"/><path d="M262 -152L245 -142A283 283 0 0 0 73 -273L81 -303"/></g>
            <g stroke="#6a8ce0"><path d="M-81 -303L-77 -289A299 299 0 0 0 -211 -211L-222 -222"/></g>
            <g stroke="#6cc0ae"><path d="M-303 -81L-284 -76A294 294 0 0 0 -284 76L-303 81"/></g>
            <g stroke="#b0aede"><path d="M-222 222L-204 204A288 288 0 0 0 -75 278L-81 303"/></g>
            <g stroke="#d6c04e"><path d="M303 81L290 78A300 300 0 0 1 212 212L222 222"/><path d="M260 150L247 142A285 285 0 0 1 74 275L81 303"/></g>
            <g stroke="#777"><path d="M172 -225L164 -214A270 270 0 0 0 -135 -234L-150 -259"/><path d="M18 -269L12 -180A180 180 0 0 0 -156 90L-233 135"/><path d="M-294 0H-269A269 269 0 0 0 -135 233L-144 249"/><path d="M-153 -95L-20 -13A24 24 0 0 0 15 19L173 226"/></g>
          </g>
          <g class="months">
            <text transform="translate(881 576) rotate(-15)" x="314" y="8">January</text>
            <text transform="translate(881 576) rotate(-45)" x="313" y="8">February</text>
            <text transform="translate(881 576) rotate(-75)" x="315" y="8">March</text>
            <text transform="translate(881 576) rotate(15)" x="313" y="8">August</text>
            <text transform="translate(881 576) rotate(45)" x="315" y="8">July</text>
            <text transform="translate(881 576) rotate(75)" x="313" y="8">June</text>
            <g text-anchor="end">
            <text transform="translate(881 576) rotate(75)" x="-314" y="8">November</text>
            <text transform="translate(881 576) rotate(45)" x="-314" y="8">December</text>
            <text transform="translate(881 576) rotate(15)" x="-314" y="8">April</text>
            <text transform="translate(881 576) rotate(-15)" x="-314" y="8">October</text>
            <text transform="translate(881 576) rotate(-45)" x="-314" y="8">May</text>
            <text transform="translate(881 576) rotate(-75)" x="-311" y="8">September</text>
            </g>
          </g>
          <path class="axis" d="M880 576H1196M881 576v11M912 576v11M944 576v11M975 576v11M1007 576v11M1038 576v11M1069 576v11M1101 576v11M1132 576v11M1164 576v11M1195 576v11M897 576v6M928 576v6M960 576v6M991 576v6M1022 576v6M1054 576v6M1085 576v6M1117 576v6M1148 576v6M1180 576v6"/>
          <g class="ticks">
            <text transform="translate(875 593) rotate(90)">0.20</text><text transform="translate(906 593) rotate(90)">0.18</text><text transform="translate(938 593) rotate(90)">0.16</text><text transform="translate(969 593) rotate(90)">0.14</text><text transform="translate(1001 593) rotate(90)">0.12</text><text transform="translate(1032 593) rotate(90)">0.10</text><text transform="translate(1063 593) rotate(90)">0.08</text><text transform="translate(1095 593) rotate(90)">0.06</text><text transform="translate(1126 593) rotate(90)">0.04</text><text transform="translate(1158 593) rotate(90)">0.02</text><text transform="translate(1189 593) rotate(90)">0.00</text>
          </g>
          <path fill="#fff" stroke="#444" d="M976 605v24l5-4 4 8 4-2-3-8h6z"/>
        </svg>
      </div>
    </div>
    <div class="row bottom">
      <div class="bar"><i class="grip"></i>
        <button class="b n" aria-label="折线图"><svg><use href="#line"/></svg><i class="ar k"></i></button><button class="b n" aria-label="散点图"><svg><use href="#scat"/></svg><i class="ar k"></i></button><button class="b n" aria-label="点线图"><svg><use href="#ls"/></svg><i class="ar k"></i></button><button class="b n" aria-label="柱状图"><svg><use href="#colb"/></svg><i class="ar k"></i></button><button class="b n" aria-label="多面板"><svg><use href="#multi"/></svg><i class="ar k"></i></button><button class="b n" aria-label="箱线图"><svg><use href="#box"/></svg><i class="ar k"></i></button><button class="b n" aria-label="面积图"><svg><use href="#area"/></svg><i class="ar k"></i></button><button class="b n" aria-label="极坐标"><svg><use href="#polar"/></svg><i class="ar k"></i></button><button class="b n" aria-label="股票图"><svg><use href="#candle"/></svg><i class="ar k"></i></button><button class="b g" aria-label="模板库"><svg><use href="#stack"/></svg></button>
      </div><i class="cap"></i>
      <div class="bar"><i class="grip"></i>
        <button class="b g n" aria-label="3D柱"><svg><use href="#c3d"/></svg><i class="ar k"></i></button><i class="sep"></i><button class="b g n" aria-label="3D曲面"><svg><use href="#c3e"/></svg><i class="ar k"></i></button><button class="b g n" aria-label="3D散点"><svg><use href="#c3f"/></svg><i class="ar k"></i></button><button class="b g n" aria-label="等高线"><svg><use href="#cont"/></svg><i class="ar k"></i></button><button class="b g n" aria-label="热图"><svg><use href="#cont2"/></svg><i class="ar k"></i></button><button class="b g" aria-label="图像"><svg><use href="#gsq"/></svg></button>
      </div><i class="cap"></i>
      <div class="bar"><i class="grip"></i>
        <button class="b g" aria-label="屏蔽范围"><svg><use href="#m1"/></svg></button><button class="b g" aria-label="取消屏蔽"><svg><use href="#m2"/></svg></button><i class="sep"></i><button class="b g" aria-label="隐藏屏蔽"><svg><use href="#m3"/></svg></button><button class="b g" aria-label="交换屏蔽"><svg><use href="#r1"/></svg></button><button class="b" aria-label="屏蔽颜色"><svg><use href="#r2"/></svg></button><i class="sep"></i><button class="b" aria-label="屏蔽点"><svg><use href="#r3"/></svg></button>
      </div><i class="cap"></i>
      <div class="bar push"><i class="grip"></i>
        <button class="b g" aria-label="逆时针"><svg><use href="#q1"/></svg></button><button class="b g" aria-label="顺时针"><svg><use href="#q2"/></svg></button><button class="b g" aria-label="左倾"><svg><use href="#q3"/></svg></button><button class="b g" aria-label="右倾"><svg><use href="#q4"/></svg></button><button class="b g" aria-label="下倾"><svg><use href="#q5"/></svg></button><button class="b g" aria-label="上倾"><svg><use href="#q6"/></svg></button><button class="b g" aria-label="增加透视"><svg><use href="#q7"/></svg></button><button class="b g" aria-label="减少透视"><svg><use href="#q8"/></svg></button><button class="b g" aria-label="适合框架"><svg><use href="#q9"/></svg></button><button class="b g" aria-label="重置旋转"><svg><use href="#q10"/></svg></button><button class="b g" aria-label="重置"><svg><use href="#q11"/></svg></button>
        <span class="combo size"><select aria-label="角度"><option>10</option></select><i class="ar"></i></span>
      </div><i class="cap"></i>
    </div>
  </section>

  <div class="side right">
    <div class="vbar"><i class="vgrip"></i>
      <button class="v on" aria-label="抗锯齿"><svg><use href="#anti"/></svg></button><button class="v" aria-label="重缩放"><svg><use href="#ax1"/></svg></button><button class="v" aria-label="缩放X"><svg><use href="#ax2"/></svg></button><button class="v" aria-label="缩放Y"><svg><use href="#ax3"/></svg></button><button class="v" aria-label="交换XY"><svg><use href="#xy"/></svg></button><button class="v on" aria-label="快速模式"><svg><use href="#runb"/></svg></button><i class="vsep"></i><button class="v" aria-label="提取"><svg><use href="#l1"/></svg></button><button class="v" aria-label="拆分"><svg><use href="#l2"/></svg></button><button class="v" aria-label="合并图层"><svg><use href="#l3"/></svg></button><button class="v" aria-label="合并窗口"><svg><use href="#wins"/></svg></button><i class="vsep"></i><button class="v" aria-label="左下轴"><svg><use href="#e1"/></svg></button><button class="v" aria-label="上轴"><svg><use href="#e2"/></svg></button><button class="v" aria-label="右轴"><svg><use href="#e3"/></svg></button><button class="v" aria-label="上右轴"><svg><use href="#e4"/></svg></button><button class="v" aria-label="插图"><svg><use href="#e5"/></svg></button><button class="v" aria-label="数据插图"><svg><use href="#e6"/></svg></button>
    </div><i class="vcap nar"></i>
    <div class="vbar grow"><i class="vgrip"></i>
      <button class="v g" aria-label="左对齐"><svg><use href="#p1"/></svg></button><button class="v g" aria-label="右对齐"><svg><use href="#p2"/></svg></button><i class="vsep"></i><button class="v g" aria-label="上对齐"><svg><use href="#p3"/></svg></button><button class="v g" aria-label="下对齐"><svg><use href="#p4"/></svg></button><i class="vsep"></i><button class="v g" aria-label="垂直居中"><svg><use href="#p5"/></svg></button><button class="v g" aria-label="水平居中"><svg><use href="#p6"/></svg></button><i class="vsep"></i><button class="v g" aria-label="同宽"><svg><use href="#p7"/></svg></button>
    </div><i class="vcap nar"><svg class="dn"><use href="#dd"/></svg></i>
  </div>
  <aside class="tabs rt">
    <button class="tab t3">Apps</button><button class="tab t4">对象管理器</button>
  </aside>
</main>

<footer class="status">
  <span class="hint"><span class="back">&lt; &lt;</span>【开始】菜单 (F1)</span>
  <span>--</span><span class="au">AU : 开</span><span>1:[USMeanTempera]"Cluster Plot Data1"!Col("变量")[1:23]</span><span>1:[A]1!1</span><span class="deg">弧度</span><i class="rs"></i>
</footer>
</div>

<svg class="orb" viewBox="0 0 46 46"><defs><radialGradient id="og" cx=".5" cy=".35"><stop offset="0" stop-color="#ffb09c"/><stop offset="1" stop-color="#d8402c"/></radialGradient></defs><circle cx="23" cy="23" r="22" fill="url(#og)" stroke="#e8a090"/><path d="M14 34l9-20 6 8 8-12" stroke="#567a9c"/><path d="M4 22h38" stroke="#fff" stroke-opacity=".4" stroke-width="1"/></svg>
<svg class="bili" viewBox="0 0 96 44"><g stroke="#fff" stroke-width="6" stroke-linecap="round"><path d="M4 4l3 34"/><circle cx="12" cy="31" r="7"/><path d="M28 22l1 17M37 8l2 31M46 22l1 17M53 4l3 34"/><circle cx="61" cy="31" r="7"/><path d="M77 22l1 17M84 8l2 31M92 22l1 17"/></g></svg>
<span class="mark">BV1f7411T7mP P3 00:00:53/00:02:12</span>
<a class="src" href="#">https://blog.csdn.net/Temmie1024</a>
</div>
</body>
</html>
```
FILE: styles.css
```css
* { box-sizing: border-box; }
body { margin: 0; background: #000; color: #111; font: 16px/20px "Noto Sans", "Noto Sans CJK SC", sans-serif; }
button, select { font: inherit; color: inherit; background: none; border: 0; padding: 0; margin: 0; }
svg { fill: none; stroke: currentColor; stroke-width: 2; }
i { font-style: normal; }
.defs { position: absolute; width: 0; height: 0; }
.desktop { position: relative; min-height: 100vh; padding: 0 249px 0 217px; display: flex; overflow: hidden; }
.app { flex: 1; min-width: 0; display: flex; flex-direction: column; background: #edeefa; border-left: 1px solid #5ab4e0; border-right: 3px solid #1c4f94; }

.title { display: flex; align-items: center; height: 42px; background: #fff; padding: 0 22px 4px 12px; }
.logo { width: 24px; height: 28px; margin-right: 8px; }
.title h1 { flex: 1; margin: 0; font: 400 18px/24px Roboto, "Noto Sans", sans-serif; white-space: nowrap; }
.winbtns { display: flex; gap: 53px; padding-right: 5px; }
.winbtns button { width: 16px; height: 16px; display: flex; }
.winbtns svg { width: 16px; height: 16px; stroke-width: 1; }

.menu { display: flex; align-items: center; height: 37px; padding: 0 8px 0 1px; background: #edeefa; }
.doc { width: 24px; height: 24px; margin: 0 15px 0 0; }
.menu > button { font: 20px/28px "Noto Sans CJK SC", sans-serif; margin-right: 22px; white-space: nowrap; color: #222; }
.menu small { font: 14px/28px "Liberation Sans", sans-serif; }
.mdi { margin-left: auto; display: flex; gap: 11px; padding-top: 8px; }
.mdi button { width: 14px; height: 14px; display: flex; }
.mdi svg { width: 14px; height: 14px; }

.row { display: flex; height: 40px; padding: 0 0 2px; background: #edeefa; }
.bar { display: flex; align-items: center; height: 38px; border-radius: 4px 0 0 4px; border-bottom: 1px solid #9a9aac; background: linear-gradient(#fbfbff, #f1f1f9 40%, #d4d4e1 70%, #b7b7c9); }
.grow { flex: 1; min-width: 0; }
.grip { flex: none; width: 15px; height: 24px; background: radial-gradient(circle, #9c9cae 1px, transparent 2px) center / 15px 6px; }
.sep { flex: none; width: 13px; height: 24px; background: linear-gradient(#c4c4d2, #c4c4d2) center / 1px 100% no-repeat; }
.b { flex: none; width: 33px; height: 33px; display: flex; align-items: center; justify-content: center; color: #000; }
.b svg { width: 24px; height: 24px; }
.g { color: #74747e; }
.l { color: #a6a6b0; }
.n { width: 47px; gap: 8px; }
.d47 { width: 47px; gap: 4px; }
.d53 { width: 53px; gap: 10px; }
.ar { flex: none; border: solid transparent; border-width: 6px 5px 0; border-top-color: currentColor; }
.ar.k { border-top-color: #111; }
.cap { flex: none; width: 20px; height: 38px; border-radius: 0 4px 0 0; display: flex; flex-direction: column; justify-content: flex-end; align-items: center; gap: 3px; padding-bottom: 5px; background: linear-gradient(#b2b2c2, #c6c6d4 50%, #edeefa 85%); }
.cap::before { content: ""; width: 10px; height: 2px; background: #111; }
.cap::after { content: ""; border: solid transparent; border-width: 6px 5px 0; border-top-color: #111; }
.wcap { width: 22px; }
.more { width: 18px; }
.more svg { order: -1; width: 14px; height: 7px; margin: 8px 0 auto; }
.stub { width: 42px; }
.combo { flex: none; display: grid; grid-template-columns: 1fr 22px; align-items: center; height: 29px; background: #f4f4f8; border: 1px solid #a8a8b4; color: #666; }
.combo select { grid-area: 1 / 1 / 2 / 3; appearance: none; height: 27px; padding-left: 4px; border-radius: 0; min-width: 0; }
.combo .ar { grid-area: 1 / 2; justify-self: center; pointer-events: none; }
.zoom { width: 85px; margin: 0 3px; color: #111; background: #fff; border-color: #f4f4f8; }
.zoom .ar { color: #111; }
.font { width: 188px; margin: 0 8px 0 4px; grid-template-columns: 38px 1fr 22px; background: #fafafc; font-size: 17px; }
.font svg { width: 20px; height: 20px; justify-self: center; grid-area: 1 / 1; }
.font select { grid-area: 1 / 2 / 2 / 4; padding-left: 0; }
.font .ar { grid-area: 1 / 3; }
.size { width: 86px; margin-right: 7px; }
.lw hr { grid-area: 1 / 1; width: 48px; margin: 0 0 0 6px; border: 0; height: 2px; background: #222; }
.sw { display: flex; align-items: center; gap: 8px; margin: 0 7px 0 3px; color: #666; }
.sw i:first-child { width: 53px; height: 25px; border: 1px solid #a8a8b4; }
.t { font: 700 22px/30px "Liberation Serif", serif; color: #74747e; }
.t i { font-style: italic; }
.x { font-size: 18px; }
.x sup, .x sub { font: 12px/12px "Liberation Sans", sans-serif; }
.x sup { align-self: flex-start; padding-top: 3px; }
.x sub { align-self: flex-end; padding-bottom: 2px; }
.ss { display: flex; flex-direction: column; font: 12px/12px "Liberation Sans", sans-serif; }
.big { font-size: 28px; }
.t .tri { width: 8px; height: 6px; align-self: flex-start; margin-top: 5px; fill: currentColor; stroke: none; }
.fc { font: 700 22px/20px "Liberation Serif", serif; border-bottom: 5px solid #66666e; width: 24px; }
.abc { width: 36px; font: 15px/18px "Noto Sans", sans-serif; }
.home { width: 32px; background: #cfe8fa; border: 2px solid #2a88c0; font: 700 11px/16px "Liberation Mono", monospace; color: #345; }

main { flex: 1; display: flex; min-height: 0; background: #edeefa; border-top: 2px solid #8e8e9c; }
.tabs { width: 33px; display: flex; flex-direction: column; padding-right: 4px; }
.tab { writing-mode: vertical-rl; text-orientation: sideways; font: 18px/28px "Noto Sans CJK SC", sans-serif; color: #6a6a6e; background: #f1f1f3; border: solid #d2d2dc; border-width: 0 1px 1px 0; text-align: left; padding-top: 26px; }
.on.tab { color: #111; padding-top: 9px; }
.tab span { margin-top: 8px; }
.t1 { height: 172px; }
.t2 { height: 136px; }
.side { display: flex; flex-direction: column; padding-bottom: 1px; }
.left { width: 54px; }
.vbar { display: flex; flex-direction: column; width: 36px; padding-bottom: 5px; background: linear-gradient(90deg, #f8f8fe, #ececf6 45%, #bcbccd); border-left: 1px solid #b8b8c4; }
.wide { width: 52px; padding-bottom: 9px; }
.narrow { width: 39px; }
.vgrip { width: 36px; height: 12px; background: radial-gradient(circle, #9c9cae 1px, transparent 2px) 3px 0 / 6px 10px; align-self: flex-start; background-clip: content-box; padding: 0 6px; }
.v { flex: none; height: 33px; min-width: 35px; display: flex; align-items: center; gap: 5px; padding-left: 6px; color: #000; }
.v.g { color: #74747e; }
.v svg { flex: none; width: 24px; height: 24px; }
.v.on { width: 33px; min-width: 0; margin-left: 2px; padding-left: 3px; background: #cfe4f6; border: 1px solid #2a88c0; }
.vsep { height: 13px; width: 24px; background: linear-gradient(#c4c4d2, #c4c4d2) 6px center / 14px 1px no-repeat; }
.vcap { height: 18px; width: 52px; padding-right: 5px; display: flex; align-items: center; justify-content: flex-end; gap: 3px; background: linear-gradient(90deg, #edeefa, #c4c4d2); }
.vcap::before { content: ""; width: 2px; height: 9px; background: #111; }
.vcap::after { content: ""; border: solid transparent; border-width: 5px 0 5px 6px; border-left-color: #111; }
.nar { width: 36px; }
.dn { order: -1; width: 8px; height: 14px; margin-right: 4px; }
.right { width: 40px; padding-left: 4px; background: #edeefa; }
.rt { width: 35px; padding: 0 2px 0 5px; }
.t3 { height: 81px; padding-top: 9px; font: 16px/26px "Liberation Mono", monospace; }
.t4 { height: 154px; }

.center { flex: 1; min-width: 0; display: flex; flex-direction: column; }
.work { flex: 1; display: flex; background: #bfbfbf; border-left: 2px solid #7c7c86; }
.page { flex: 0 1 62.8%; position: relative; background: #fefefe; }
.layer { position: absolute; left: 0; top: 0; display: flex; flex-direction: column; align-items: center; gap: 5px; }
.layer span { width: 31px; height: 30px; background: #c3c3c3; font: 700 20px/34px "Liberation Sans", sans-serif; text-align: center; }
.layer svg { width: 24px; height: 26px; margin-left: 5px; }
.plot { display: block; width: 100%; stroke: none; }
.den { stroke-width: 1.5; }
.months { fill: #111; font: 23px "Liberation Sans", sans-serif; }
.ticks { fill: #222; font: 18px "Liberation Sans", sans-serif; }
.axis { stroke: #111; stroke-width: 2; }
.bottom { height: 44px; padding: 2px 0 4px; }
.bottom .cap { width: 19px; }
.bottom .size { margin: 0 4px 0 5px; }
.push { margin-left: auto; }
.bottom > .cap:last-child { margin-right: 47px; }

.status { display: flex; align-items: center; height: 26px; background: #f1f1f1; border-top: 1px solid #d6d6da; font: 16px/22px "Noto Sans", "Noto Sans CJK SC", sans-serif; white-space: nowrap; padding-right: 2px; }
.status > span { padding: 0 5px; border-right: 1px solid #d4d4d8; }
.status .hint { flex: 1; padding-left: 53px; font-size: 17px; }
.back { padding-right: 6px; }
.status .au { padding: 0 11px 0 14px; }
.status .deg { font-size: 20px; }
.rs { width: 18px; height: 14px; margin-left: 4px; background: radial-gradient(circle, #aaa 1px, transparent 2px) 0 0 / 6px 6px; }

.orb { position: absolute; left: 221px; bottom: -3px; width: 46px; height: 46px; }
.bili { position: absolute; left: 20px; bottom: 21px; width: 96px; height: 44px; opacity: .33; }
.mark { position: absolute; left: 128px; bottom: 14px; font: 28px/36px "Noto Sans", sans-serif; color: rgba(255, 255, 255, .34); white-space: nowrap; }
.src { position: absolute; right: 9px; bottom: 9px; font: 16px/22px "Liberation Sans", sans-serif; color: #b4b4b4; text-decoration: none; }
```
